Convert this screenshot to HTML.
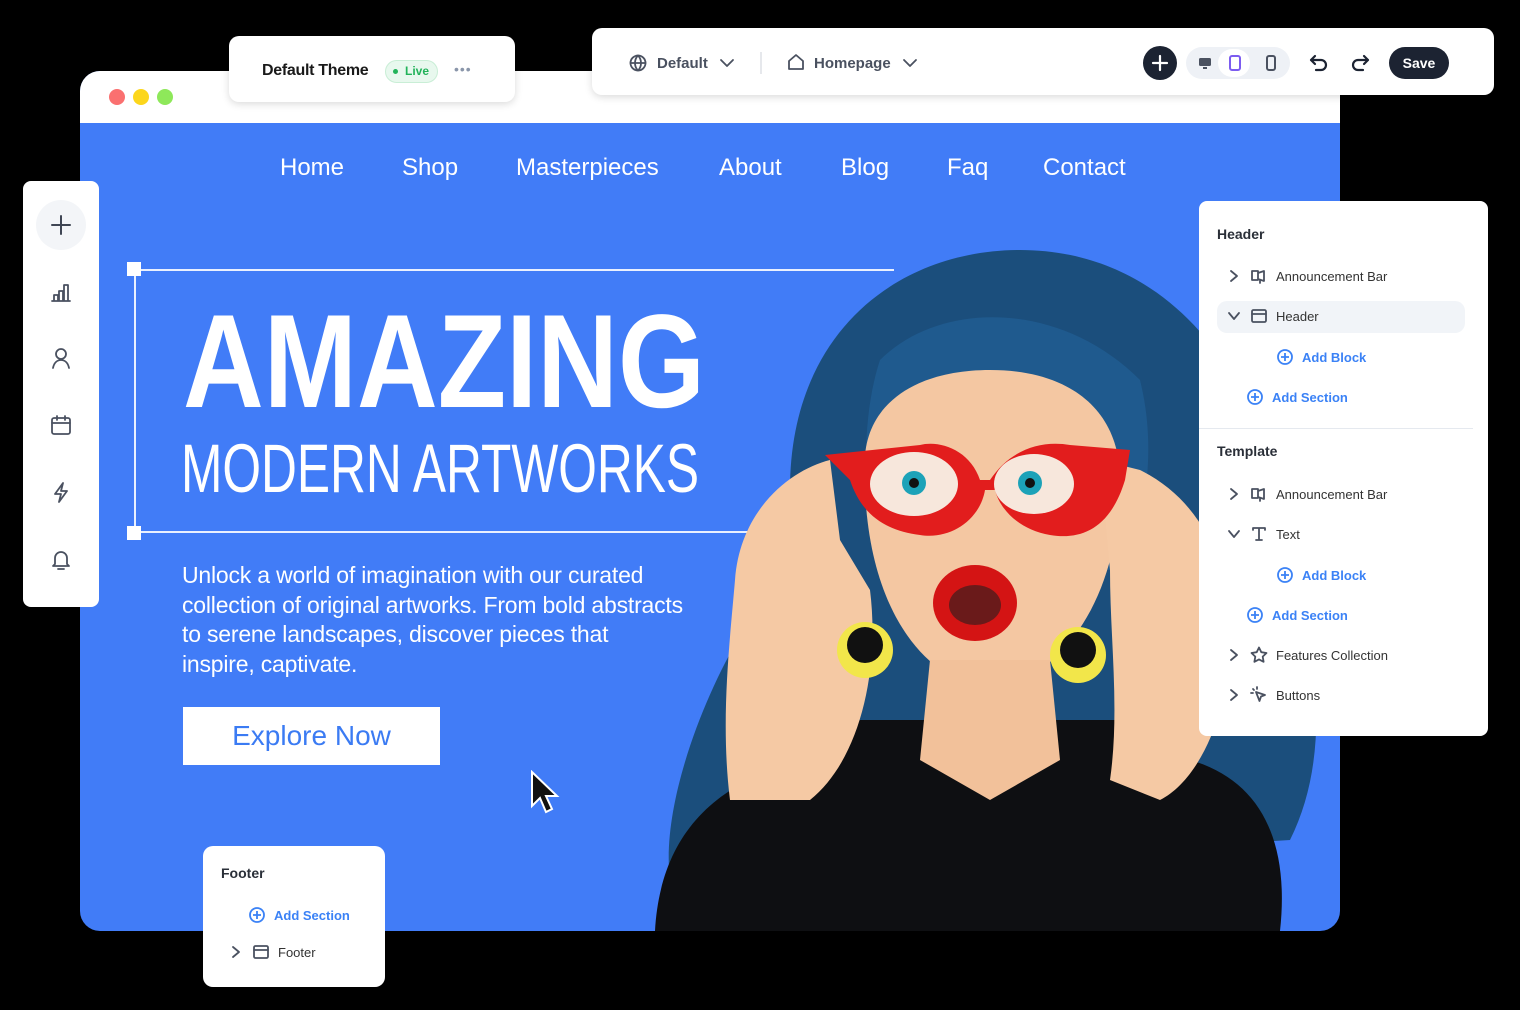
<!DOCTYPE html>
<html><head><meta charset="utf-8"><style>
*{margin:0;padding:0;box-sizing:border-box}
body{width:1520px;height:1010px;background:#000;position:relative;overflow:hidden;font-family:"Liberation Sans",sans-serif}
.abs{position:absolute}
.card{position:absolute;background:#fff;border-radius:12px}
.nav a{position:absolute;top:154px;color:#fff;font-size:24px;text-decoration:none}
.pi{position:absolute;font-size:13px;color:#333;display:flex;align-items:center;gap:8px}
.add{color:#3b82f6;font-weight:bold;font-size:13px}
svg.i{fill:none;stroke:#4a5160;stroke-width:1.8;stroke-linecap:round;stroke-linejoin:round}
</style></head><body>

<div class="abs" style="left:80px;top:71px;width:1260px;height:860px;border-radius:20px;background:#417cf7;overflow:hidden">
  <div style="height:52px;background:#fff"></div>
</div>
<div class="abs" style="left:109px;top:89px;width:16px;height:16px;border-radius:50%;background:#fa7070"></div>
<div class="abs" style="left:133px;top:89px;width:16px;height:16px;border-radius:50%;background:#fcd61c"></div>
<div class="abs" style="left:157px;top:89px;width:16px;height:16px;border-radius:50%;background:#8ee85a"></div>

<div class="nav">
<a style="left:280px">Home</a><a style="left:402px">Shop</a><a style="left:516px">Masterpieces</a><a style="left:719px">About</a><a style="left:841px">Blog</a><a style="left:947px">Faq</a><a style="left:1043px">Contact</a>
</div>

<div class="abs" style="left:134px;top:269px;width:760px;height:2px;background:#e9f0ff"></div>
<div class="abs" style="left:134px;top:531px;width:620px;height:2px;background:#e9f0ff"></div>
<div class="abs" style="left:134px;top:269px;width:2px;height:264px;background:#e9f0ff"></div>
<div class="abs" style="left:127px;top:262px;width:14px;height:14px;background:#fff"></div>
<div class="abs" style="left:127px;top:526px;width:14px;height:14px;background:#fff"></div>

<svg class="abs" style="left:0;top:0" width="800" height="520">
<text x="183" y="407" fill="#fff" font-family="Liberation Sans Narrow, Liberation Sans, sans-serif" font-weight="bold" font-size="133" textLength="522" lengthAdjust="spacingAndGlyphs">AMAZING</text>
<text x="181" y="492" fill="#fff" font-family="Liberation Sans Narrow, Liberation Sans, sans-serif" font-size="69" textLength="518" lengthAdjust="spacingAndGlyphs">MODERN ARTWORKS</text>
</svg>

<div class="abs" style="left:182px;top:561px;width:560px;color:#fff;font-size:23px;line-height:29.5px;letter-spacing:-0.2px;white-space:nowrap">Unlock a world of imagination with our curated<br>collection of original artworks. From bold abstracts<br>to serene landscapes, discover pieces that<br>inspire, captivate.</div>
<div class="abs" style="left:183px;top:707px;width:257px;height:58px;background:#fff;color:#3b7bf3;font-size:28px;text-align:center;line-height:58px">Explore Now</div>

<svg class="abs" style="left:528px;top:770px" width="36" height="52"><path d="M4 2 L4 36 L12 28 L18 42 L24 39 L18 26 L29 26 Z" fill="#111" stroke="#fff" stroke-width="2"/></svg>

<svg class="abs" style="left:640px;top:240px" width="700" height="691">
<path d="M150 250 C150 90 260 10 380 10 C520 10 620 120 650 300 C680 420 690 520 650 600 L30 640 C20 560 70 440 110 380 Z" fill="#1b4e7c"/>
<path d="M240 120 C300 60 420 60 500 140 C520 220 500 300 480 330 L250 330 C220 280 220 180 240 120Z" fill="#1f5a8e"/>
<path d="M15 691 C20 600 70 540 170 520 L220 480 L500 480 L550 520 C620 540 650 600 640 691 Z" fill="#0e0f12"/>
<path d="M225 215 C230 160 280 130 350 130 C430 130 480 170 480 240 C480 360 420 440 350 450 C280 440 220 360 225 215Z" fill="#f4c7a2"/>
<path d="M290 420 L410 420 L420 520 L350 560 L280 520Z" fill="#f2c19a"/>
<path d="M95 340 C100 270 150 230 190 220 L200 300 L230 350 C240 430 220 520 170 560 L90 560 C80 480 90 400 95 340Z" fill="#f5c9a4"/>
<path d="M460 220 L500 230 C560 260 590 320 590 400 C590 470 560 540 520 560 L470 540 C480 470 470 400 470 330Z" fill="#f5c9a4"/>
<path d="M185 215 L280 205 C300 200 330 210 340 240 L350 240 C370 210 400 200 430 205 L490 210 L485 240 C470 290 440 300 410 295 C380 290 360 270 355 250 L345 250 C340 280 310 300 280 295 C240 290 220 270 210 240 Z" fill="#e21d1d"/>
<ellipse cx="274" cy="244" rx="44" ry="32" fill="#f7e7dc"/>
<ellipse cx="394" cy="244" rx="40" ry="30" fill="#f7e7dc"/>
<circle cx="274" cy="243" r="12" fill="#1ca2b8"/><circle cx="390" cy="243" r="12" fill="#1ca2b8"/>
<circle cx="274" cy="243" r="5" fill="#111"/><circle cx="390" cy="243" r="5" fill="#111"/>
<ellipse cx="335" cy="363" rx="42" ry="38" fill="#d41414"/>
<ellipse cx="335" cy="365" rx="26" ry="20" fill="#6a1a1a"/>
<circle cx="225" cy="410" r="28" fill="#f2e64a"/><circle cx="225" cy="405" r="18" fill="#111"/>
<circle cx="438" cy="415" r="28" fill="#f2e64a"/><circle cx="438" cy="410" r="18" fill="#111"/>
</svg>

<div class="card" style="left:229px;top:36px;width:286px;height:66px;border-radius:10px;box-shadow:0 2px 8px rgba(0,0,0,.15)">
  <div class="abs" style="left:33px;top:26px;font-size:16px;font-weight:bold;color:#1a1a1a;letter-spacing:-0.3px">Default Theme</div>
  <div class="abs" style="left:156px;top:24px;width:53px;height:23px;border-radius:12px;background:#e8f8ee;border:1px solid #c9eed6;color:#22b35a;font-size:12px;font-weight:bold;line-height:21px;padding-left:19px">Live</div>
  <div class="abs" style="left:164px;top:33px;width:5px;height:5px;border-radius:50%;background:#22b35a"></div>
  <div class="abs" style="left:225px;top:25px;color:#8a96aa;font-size:14px;letter-spacing:1px">•••</div>
</div>

<div class="card" style="left:592px;top:28px;width:902px;height:67px;border-radius:10px;box-shadow:0 2px 8px rgba(0,0,0,.15)">
  <svg class="abs i" style="left:37px;top:26px" width="18" height="18" viewBox="0 0 18 18"><circle cx="9" cy="9" r="7.5"/><path d="M1.5 9h15M9 1.5c-4 4-4 11 0 15M9 1.5c4 4 4 11 0 15"/></svg>
  <div class="abs" style="left:65px;top:27px;font-size:15px;font-weight:bold;color:#4a5160">Default</div>
  <svg class="abs i" style="left:127px;top:30px" width="16" height="10"><path d="M2 2l6 6 6-6"/></svg>
  <div class="abs" style="left:168px;top:24px;width:2px;height:22px;background:#e6e8ec"></div>
  <svg class="abs i" style="left:195px;top:25px" width="18" height="18"><path d="M2 16V8l7-6 7 6v8z"/></svg>
  <div class="abs" style="left:222px;top:27px;font-size:15px;font-weight:bold;color:#4a5160">Homepage</div>
  <svg class="abs i" style="left:310px;top:30px" width="16" height="10"><path d="M2 2l6 6 6-6"/></svg>
  <div class="abs" style="left:551px;top:18px;width:34px;height:34px;border-radius:50%;background:#1c2332"></div>
  <svg class="abs" style="left:558px;top:25px" width="20" height="20"><path d="M10 3v14M3 10h14" stroke="#fff" stroke-width="2.2" stroke-linecap="round"/></svg>
  <div class="abs" style="left:594px;top:19px;width:104px;height:32px;border-radius:16px;background:#eef1f6"></div>
  <div class="abs" style="left:626px;top:21px;width:32px;height:28px;border-radius:14px;background:#fff"></div>
  <svg class="abs" style="left:605px;top:27px" width="16" height="16"><rect x="2" y="3" width="12" height="8" rx="1.5" fill="#4a5160"/><rect x="6" y="12" width="4" height="2" fill="#4a5160"/></svg>
  <svg class="abs" style="left:636px;top:26px" width="14" height="18"><rect x="2" y="2" width="10" height="14" rx="2" fill="none" stroke="#7c5cf0" stroke-width="2"/></svg>
  <svg class="abs" style="left:672px;top:26px" width="14" height="18"><rect x="3" y="2" width="8" height="14" rx="2" fill="none" stroke="#4a5160" stroke-width="2"/></svg>
  <svg class="abs" style="left:716px;top:24px" width="22" height="22" fill="none" stroke="#1c2332" stroke-width="2.2" stroke-linecap="round" stroke-linejoin="round"><path d="M7 4L3 8l4 4M3 8h10a5 5 0 010 10H8"/></svg>
  <svg class="abs" style="left:757px;top:24px" width="22" height="22" fill="none" stroke="#1c2332" stroke-width="2.2" stroke-linecap="round" stroke-linejoin="round"><path d="M15 4l4 4-4 4M19 8H9a5 5 0 000 10h5"/></svg>
  <div class="abs" style="left:797px;top:19px;width:60px;height:32px;border-radius:16px;background:#1c2332;color:#fff;font-size:14px;font-weight:bold;text-align:center;line-height:32px">Save</div>
</div>

<div class="card" style="left:23px;top:181px;width:76px;height:426px;border-radius:8px">
  <div class="abs" style="left:13px;top:19px;width:50px;height:50px;border-radius:50%;background:#f3f5f8"></div>
  <svg class="abs i" style="left:26px;top:32px" width="24" height="24"><path d="M12 3v18M3 12h18" stroke="#3f4654" stroke-width="2"/></svg>
  <svg class="abs i" style="left:27px;top:100px" width="22" height="22"><path d="M2 20h18M4 20v-6h4v6M9 20V10h4v10M14 20V4h4v16"/></svg>
  <svg class="abs i" style="left:27px;top:166px" width="22" height="22"><circle cx="11" cy="7" r="5"/><path d="M3 21c1-5 4-8 8-8s7 3 8 8"/></svg>
  <svg class="abs i" style="left:27px;top:233px" width="22" height="22"><rect x="2" y="4" width="18" height="16" rx="2"/><path d="M2 9h18M7 2v4M15 2v4"/></svg>
  <svg class="abs i" style="left:27px;top:300px" width="22" height="22"><path d="M13 2L5 13h6l-2 8 8-11h-6z"/></svg>
  <svg class="abs i" style="left:27px;top:367px" width="22" height="22"><path d="M5 16V10a6 6 0 0112 0v6l2 2H3zM8 21h6"/></svg>
</div>

<div class="card" style="left:1199px;top:201px;width:289px;height:535px;border-radius:8px">
  <div class="abs" style="left:18px;top:25px;font-size:14px;font-weight:bold;color:#2a2f38">Header</div>
  <div class="abs" style="left:18px;top:100px;width:248px;height:32px;border-radius:10px;background:#f1f4f8"></div>
  <div class="abs" style="left:0;top:227px;width:274px;height:1px;background:#e5e9ef"></div>
  <div class="abs" style="left:18px;top:242px;font-size:14px;font-weight:bold;color:#2a2f38">Template</div>
</div>
<div class="pi" style="left:1226px;top:268px"><svg class="i" width="16" height="16"><path d="M5 3l6 5-6 5"/></svg><svg class="i" width="18" height="16"><path d="M2 3h6v9H2zM8 5l6-2v10l-6-2M10 12v3"/></svg>Announcement Bar</div>
<div class="pi" style="left:1226px;top:308px"><svg class="i" width="16" height="16"><path d="M3 5l5 6 5-6"/></svg><svg class="i" width="18" height="16"><rect x="2" y="2" width="14" height="12" rx="1.5"/><path d="M2 6h14"/></svg>Header</div>
<div class="pi add" style="left:1276px;top:348px"><svg width="18" height="18" fill="none" stroke="#3b82f6" stroke-width="1.8"><circle cx="9" cy="9" r="7"/><path d="M9 5v8M5 9h8"/></svg>Add Block</div>
<div class="pi add" style="left:1246px;top:388px"><svg width="18" height="18" fill="none" stroke="#3b82f6" stroke-width="1.8"><circle cx="9" cy="9" r="7"/><path d="M9 5v8M5 9h8"/></svg>Add Section</div>
<div class="pi" style="left:1226px;top:486px"><svg class="i" width="16" height="16"><path d="M5 3l6 5-6 5"/></svg><svg class="i" width="18" height="16"><path d="M2 3h6v9H2zM8 5l6-2v10l-6-2M10 12v3"/></svg>Announcement Bar</div>
<div class="pi" style="left:1226px;top:526px"><svg class="i" width="16" height="16"><path d="M3 5l5 6 5-6"/></svg><svg class="i" width="18" height="16"><path d="M3 4V2h12v2M9 2v12M6 14h6"/></svg>Text</div>
<div class="pi add" style="left:1276px;top:566px"><svg width="18" height="18" fill="none" stroke="#3b82f6" stroke-width="1.8"><circle cx="9" cy="9" r="7"/><path d="M9 5v8M5 9h8"/></svg>Add Block</div>
<div class="pi add" style="left:1246px;top:606px"><svg width="18" height="18" fill="none" stroke="#3b82f6" stroke-width="1.8"><circle cx="9" cy="9" r="7"/><path d="M9 5v8M5 9h8"/></svg>Add Section</div>
<div class="pi" style="left:1226px;top:646px"><svg class="i" width="16" height="16"><path d="M5 3l6 5-6 5"/></svg><svg class="i" width="18" height="18"><path d="M9 1.5l2.3 4.7 5.2.8-3.8 3.6.9 5.2L9 13.4l-4.6 2.4.9-5.2L1.5 7l5.2-.8z"/></svg>Features Collection</div>
<div class="pi" style="left:1226px;top:686px"><svg class="i" width="16" height="16"><path d="M5 3l6 5-6 5"/></svg><svg class="i" width="18" height="18"><path d="M6 6l9 3-4 1.5L9.5 15z M3 3l1 1M7 1v2M1 7h2"/></svg>Buttons</div>

<div class="card" style="left:203px;top:846px;width:182px;height:141px;border-radius:10px">
  <div class="abs" style="left:18px;top:19px;font-size:14px;font-weight:bold;color:#2a2f38">Footer</div>
</div>
<div class="pi add" style="left:248px;top:906px"><svg width="18" height="18" fill="none" stroke="#3b82f6" stroke-width="1.8"><circle cx="9" cy="9" r="7"/><path d="M9 5v8M5 9h8"/></svg>Add Section</div>
<div class="pi" style="left:228px;top:944px"><svg class="i" width="16" height="16"><path d="M5 3l6 5-6 5"/></svg><svg class="i" width="18" height="16"><rect x="2" y="2" width="14" height="12" rx="1.5"/><path d="M2 6h14"/></svg>Footer</div>

</body></html>
